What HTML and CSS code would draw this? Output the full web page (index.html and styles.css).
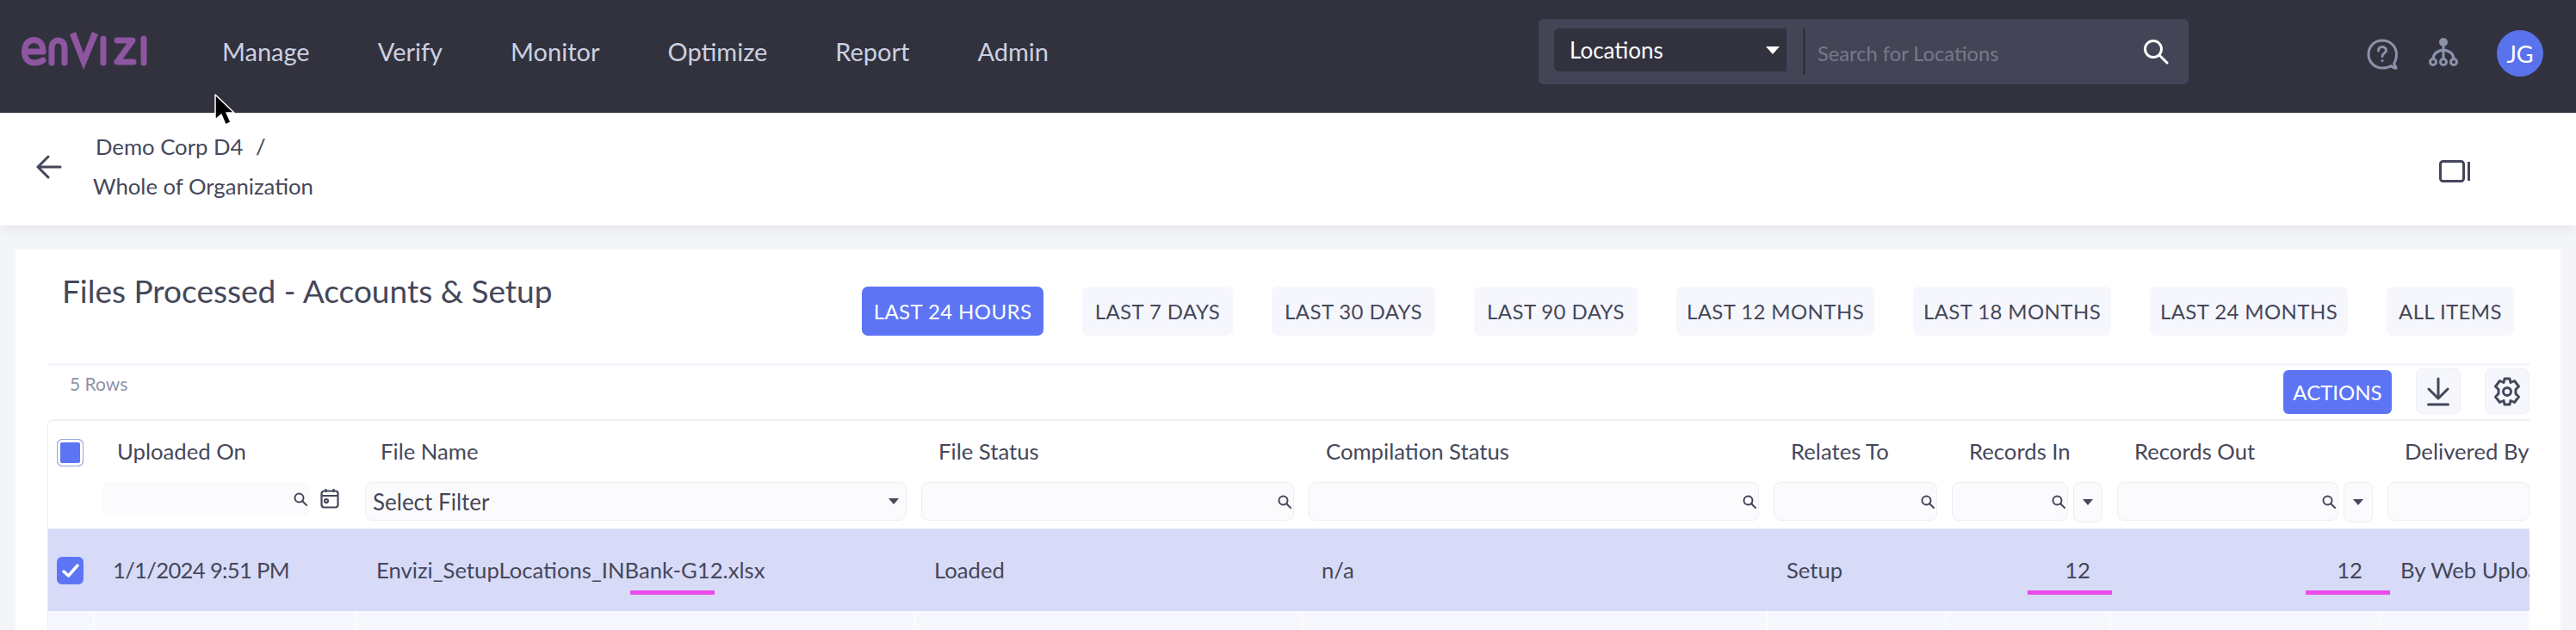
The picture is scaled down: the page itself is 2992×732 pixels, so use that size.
FILE: index.html
```html
<!DOCTYPE html>
<html lang="en">
<head>
    <meta charset="UTF-8">
    <title>Files Processed - Accounts &amp; Setup</title>
    <link rel="stylesheet" href="styles.css">
</head>
<body>
    <header class="topbar">
        <svg class="logo" viewBox="20 30 155 55" role="img" aria-label="envizi">
            <g fill="none" stroke="#8e55a0" stroke-width="7" stroke-linecap="round" stroke-linejoin="round">
                <path d="M29 60H50C50 51 46 46.500 39.500 46.500C32.500 46.500 28.500 52 28.500 60C28.500 68 33 73 40 73C44 73 47 72 50 70"/>
                <path d="M60 73V56C60 50 63.500 47 67.500 47C72 47 75 50 75 56V73"/>
                <path d="M120 45V73"/>
                <path d="M136 47H154L136 72H155"/>
                <path d="M167 45V73"/>
            </g>
            <path d="M81 40L88 37L97 62L107 37L114 40L97 81Z" fill="#8e55a0"/>
        </svg>
        <nav class="mainnav">
            <a>Manage</a>
            <a>Verify</a>
            <a>Monitor</a>
            <a>Optimize</a>
            <a>Report</a>
            <a>Admin</a>
        </nav>
        <div class="searchbox">
            <div class="searchtype"><span>Locations</span><i class="caret caret-white"></i></div>
            <div class="searchdivider"></div>
            <span class="searchplaceholder">Search for Locations</span>
            <svg class="searchicon" viewBox="0 0 30 30" fill="none" stroke="#fff" stroke-width="3" stroke-linecap="round">
                <circle cx="12" cy="12" r="9.500"/>
                <path d="M19 19L28 28"/>
            </svg>
        </div>
        <div class="topicons">
            <svg class="helpicon" viewBox="0 0 36 36" fill="none" stroke="#8b92aa" stroke-width="3" stroke-linecap="round" stroke-linejoin="round">
                <path d="M18 2C9 2 2 9 2 18C2 27 9 34 18 34C22 34 26 33 28 31.500C30 33.500 33 34.500 34 34C34.500 33 32.500 31.500 31.500 29C33.500 26 34.500 22 34.500 18C34.500 9 27 2 18 2Z"/>
                <path d="M13.500 14C13.500 11 15.500 9.500 18 9.500C20.500 9.500 22.500 11 22.500 13.500C22.500 16.500 18 17 18 20.500"/>
                <path d="M18 25.500V25.600"/>
            </svg>
            <svg class="orgicon" viewBox="0 0 34 34" fill="none" stroke="#8b92aa" stroke-width="3" stroke-linecap="round">
                <circle cx="17" cy="6" r="5" fill="#8b92aa" stroke="none"/>
                <path d="M17 8V26M5 26C5 19 10 16 17 15C24 16 29 19 29 26"/>
                <circle cx="5" cy="29" r="3.500" fill="#31323e"/>
                <circle cx="17" cy="29" r="3.500" fill="#31323e"/>
                <circle cx="29" cy="29" r="3.500" fill="#31323e"/>
            </svg>
            <div class="avatar">JG</div>
        </div>
    </header>

    <div class="subbar">
        <svg class="backicon" viewBox="0 0 30 28" fill="none" stroke="#45475a" stroke-width="3" stroke-linecap="round" stroke-linejoin="round">
            <path d="M2 14H28M14 2L2 14L14 26"/>
        </svg>
        <div class="crumbs">
            <div class="crumb-top">Demo Corp D4 <span class="crumb-slash">/</span></div>
            <div class="crumb-current">Whole of Organization</div>
        </div>
        <svg class="panelicon" viewBox="0 0 36 26" fill="none" stroke="#45475a" stroke-width="3" stroke-linejoin="round">
            <rect x="1.500" y="1.500" width="27" height="23" rx="3"/>
            <path d="M34.500 2V24"/>
        </svg>
    </div>

    <main class="card">
        <div class="cardhead">
            <h1>Files Processed - Accounts &amp; Setup</h1>
            <div class="ranges">
                <button class="range range-active">LAST 24 HOURS</button>
                <button class="range">LAST 7 DAYS</button>
                <button class="range">LAST 30 DAYS</button>
                <button class="range">LAST 90 DAYS</button>
                <button class="range">LAST 12 MONTHS</button>
                <button class="range">LAST 18 MONTHS</button>
                <button class="range">LAST 24 MONTHS</button>
                <button class="range">ALL ITEMS</button>
            </div>
        </div>

        <div class="toolbar">
            <span class="rowcount">5 Rows</span>
            <button class="actions">ACTIONS</button>
            <button class="toolbtn">
                <svg viewBox="0 0 26 34" width="26" height="34" fill="none" stroke="#45475a" stroke-width="3" stroke-linecap="round" stroke-linejoin="round">
                    <path d="M13 2V24M2 14L13 25L24 14"/>
                    <path d="M1.500 32H24.500"/>
                </svg>
            </button>
            <button class="toolbtn">
                <svg viewBox="0 0 32 34" width="32" height="34" fill="none" stroke="#45475a" stroke-width="3" stroke-linejoin="round">
                    <circle cx="16" cy="17" r="4.500"/>
                    <path d="M13 2H19L20 6.500L24.500 4.500L29.500 11L26 14.500V19.500L29.500 23L24.500 29.500L20 27.500L19 32H13L12 27.500L7.500 29.500L2.500 23L6 19.500V14.500L2.500 11L7.500 4.500L12 6.500Z"/>
                </svg>
            </button>
        </div>

        <div class="grid">
            <div class="cols headrow">
                <div class="cell checkcell"><span class="check check-partial"></span></div>
                <div class="cell">Uploaded On</div>
                <div class="cell">File Name</div>
                <div class="cell">File Status</div>
                <div class="cell">Compilation Status</div>
                <div class="cell">Relates To</div>
                <div class="cell">Records In</div>
                <div class="cell">Records Out</div>
                <div class="cell">Delivered By</div>
            </div>
            <div class="cols filterrow">
                <div></div>
                <div class="filter">
                    <div class="input input-plain"><svg class="mag" viewBox="0 0 16 16"><circle cx="6.500" cy="6.500" r="5"/><path d="M10 10L15 15"/></svg></div>
                    <svg class="calicon" viewBox="0 0 22 24" fill="none" stroke="#45475a" stroke-width="2.200" stroke-linejoin="round">
                        <rect x="1.500" y="3.500" width="19" height="19" rx="3"/>
                        <path d="M1.500 9H20.500M6.500 1V5M15.500 1V5"/>
                        <circle cx="7" cy="15" r="2"/>
                    </svg>
                </div>
                <div class="filter">
                    <div class="input input-select"><span>Select Filter</span><i class="caret"></i></div>
                </div>
                <div class="filter">
                    <div class="input"><svg class="mag" viewBox="0 0 16 16"><circle cx="6.500" cy="6.500" r="5"/><path d="M10 10L15 15"/></svg></div>
                </div>
                <div class="filter">
                    <div class="input"><svg class="mag" viewBox="0 0 16 16"><circle cx="6.500" cy="6.500" r="5"/><path d="M10 10L15 15"/></svg></div>
                </div>
                <div class="filter">
                    <div class="input"><svg class="mag" viewBox="0 0 16 16"><circle cx="6.500" cy="6.500" r="5"/><path d="M10 10L15 15"/></svg></div>
                </div>
                <div class="filter">
                    <div class="input"><svg class="mag" viewBox="0 0 16 16"><circle cx="6.500" cy="6.500" r="5"/><path d="M10 10L15 15"/></svg></div>
                    <div class="opbtn"><i class="caret"></i></div>
                </div>
                <div class="filter">
                    <div class="input"><svg class="mag" viewBox="0 0 16 16"><circle cx="6.500" cy="6.500" r="5"/><path d="M10 10L15 15"/></svg></div>
                    <div class="opbtn"><i class="caret"></i></div>
                </div>
                <div class="filter filter-last">
                    <div class="input"></div>
                </div>
            </div>
            <div class="cols datarow">
                <div class="cell checkcell"><span class="check check-on">
                    <svg viewBox="0 0 20 16" width="20" height="16" fill="none" stroke="#fff" stroke-width="3.500" stroke-linecap="round" stroke-linejoin="round"><path d="M2 9L7.500 14L18 2"/></svg>
                </span></div>
                <div class="cell cell-date">1/1/2024 9:51 PM</div>
                <div class="cell cell-file"><span class="marked">Envizi_SetupLocations_INBank-G12.xlsx<i class="mark mark-file"></i></span></div>
                <div class="cell">Loaded</div>
                <div class="cell">n/a</div>
                <div class="cell">Setup</div>
                <div class="cell cell-num"><span class="marked">12<i class="mark mark-in"></i></span></div>
                <div class="cell cell-num cell-out"><span class="marked">12<i class="mark mark-out"></i></span></div>
                <div class="cell">By Web Upload</div>
            </div>
            <div class="cols striperow">
                <div></div><div></div><div></div><div></div><div></div><div></div><div></div><div></div><div></div>
            </div>
        </div>
    </main>

    <svg class="cursor" viewBox="0 0 30 38">
        <path d="M2 1V30L9 24L14 36L20 33L15 22H24Z" fill="#000" stroke="#fff" stroke-width="1.500" stroke-linejoin="round"/>
    </svg>
</body>
</html>
```

FILE: styles.css
```css
* {
    box-sizing: border-box;
}
html, body {
    height: 732px;
    overflow: hidden;
}
body {
    margin: 0;
    position: relative;
    font-family: Lato, "Open Sans", sans-serif;
    font-size: 25.700px;
    color: #45475a;
    background-color: #f4f5f8;
}
button {
    font-family: inherit;
    border: none;
    padding: 0;
}

/* top bar */
.topbar {
    height: 132px;
    background-color: #31323e;
    display: flex;
    align-items: flex-start;
    border-bottom: 1px solid #e6e6ea;
}
.logo {
    width: 155px;
    height: 55px;
    margin: 30px 0 0 20px;
    flex: none;
}
.mainnav {
    display: flex;
    gap: 79px;
    margin: 42px 0 0 83px;
    color: #cdd0e0;
    font-size: 29px;
    line-height: 36px;
}
.searchbox {
    position: absolute;
    left: 1787px;
    top: 22px;
    width: 755px;
    height: 76px;
    background-color: #434557;
    border-radius: 6px;
    display: flex;
    align-items: flex-start;
    padding: 11px 23px 0 18px;
}
.searchtype {
    width: 270px;
    height: 50px;
    background-color: #31323e;
    border-radius: 6px 0 0 6px;
    color: #fff;
    font-size: 26px;
    display: flex;
    align-items: center;
    justify-content: space-between;
    padding: 0 8px 0 18px;
}
.searchdivider {
    width: 3px;
    height: 54px;
    margin-left: 19px;
    background-color: #31323e;
}
.searchplaceholder {
    margin: 14px 0 0 14px;
    color: #77798a;
    font-size: 23.700px;
    line-height: 30px;
    flex: 1;
}
.searchicon {
    width: 30px;
    height: 30px;
    margin-top: 12px;
}
.topicons {
    margin-left: auto;
    display: flex;
    align-items: flex-start;
    padding-right: 38px;
}
.helpicon {
    width: 36px;
    height: 36px;
    margin-top: 45px;
}
.orgicon {
    width: 34px;
    height: 34px;
    margin: 43px 0 0 36px;
}
.avatar {
    width: 54px;
    height: 54px;
    margin: 35px 0 0 45px;
    border-radius: 50%;
    background-color: #5a73ec;
    color: #fff;
    font-size: 27px;
    display: flex;
    align-items: center;
    justify-content: center;
}
.caret {
    display: block;
    width: 0;
    height: 0;
    border-left: 8px solid transparent;
    border-right: 8px solid transparent;
    border-top: 9px solid #45475a;
}
.caret-white {
    border-top-color: #fff;
}

/* breadcrumb bar */
.subbar {
    height: 130px;
    background-color: #fff;
    box-shadow: 0 4px 14px rgba(60, 60, 90, 0.08);
    display: flex;
    align-items: flex-start;
    position: relative;
}
.backicon {
    width: 30px;
    height: 28px;
    margin: 48px 0 0 42px;
}
.crumbs {
    margin: 22px 0 0 36px;
    line-height: 32px;
}
.crumb-top {
    margin-left: 3px;
}
.crumb-slash {
    margin-left: 8px;
}
.crumb-current {
    margin-top: 14px;
}
.panelicon {
    width: 36px;
    height: 26px;
    margin: 54px 123px 0 auto;
}

/* card */
.card {
    margin: 28px 18px 0;
    height: 460px;
    background-color: #fff;
    padding: 0 36px 0 37px;
}
.cardhead {
    height: 132px;
    display: flex;
    justify-content: space-between;
    align-items: flex-start;
    padding: 0 18px 0 17px;
}
h1 {
    margin: 26px 0 0;
    font-size: 37px;
    line-height: 44px;
    font-weight: 400;
}
.ranges {
    display: grid;
    grid-template-columns: 211px 175px 190px 190px 230px 230px 230px 148px;
    column-gap: 45px;
    margin-top: 43px;
}
.range {
    height: 57px;
    border-radius: 7px;
    background-color: #f6f7fd;
    color: #45475a;
    font-size: 24px;
    letter-spacing: 0.400px;
}
.range-active {
    background-color: #5d75f5;
    color: #fff;
}
.toolbar {
    height: 65px;
    border-top: 3px solid #f3f5fa;
    display: flex;
    align-items: flex-start;
}
.rowcount {
    margin: 8px 0 0 26px;
    font-size: 21px;
    line-height: 26px;
    color: #8f93a8;
    flex: 1;
}
.actions {
    width: 126px;
    height: 51px;
    margin-top: 5px;
    border-radius: 6px;
    background-color: #5d75f5;
    color: #fff;
    font-size: 24px;
}
.toolbtn {
    width: 52px;
    height: 53px;
    margin: 3px 0 0 28px;
    border: 1px solid #eef0f5;
    border-radius: 7px;
    background-color: #f6f7fd;
    display: flex;
    align-items: center;
    justify-content: center;
}

/* table */
.grid {
    border-top: 2px solid #f0f1f4;
    border-left: 1px solid #eceef3;
    border-radius: 6px 0 0 0;
    overflow: hidden;
}
.cols {
    display: grid;
    grid-template-columns: 53px 306px 648px 450px 540px 207px 192px 314px 172px;
}
.cell {
    white-space: nowrap;
    overflow: hidden;
}
.headrow {
    height: 71px;
    align-items: center;
    padding-bottom: 2px;
}
.headrow .cell {
    padding-left: 27px;
}
.headrow .checkcell,
.datarow .checkcell {
    padding-left: 10px;
    overflow: visible;
}
.headrow .checkcell {
    position: relative;
    top: 2px;
}
.check {
    display: block;
    width: 31px;
    height: 32px;
    border-radius: 6px;
}
.check-partial {
    background-color: #5d75f5;
    border: 1px solid #9aa6d8;
    box-shadow: inset 0 0 0 3px #fff;
}
.check-on {
    background-color: #5d75f5;
    display: flex;
    align-items: center;
    justify-content: center;
}
.filterrow {
    height: 55px;
    border-bottom: 1px solid #e3e5ee;
}
.filter {
    display: flex;
    gap: 6px;
    padding: 0 10px 0 7px;
    align-items: flex-start;
}
.filter-last {
    padding-right: 0;
}
.input {
    flex: 1;
    height: 45px;
    background-color: #fbfbfe;
    border: 1px solid #eceef2;
    border-radius: 8px;
    display: flex;
    align-items: center;
    justify-content: flex-end;
    padding-right: 2px;
}
.input-plain {
    height: 40px;
    flex: none;
    width: 242px;
    margin-left: 2px;
    border-color: #fbfbfe;
}
.input-select {
    justify-content: space-between;
    padding: 0 8px 0 8px;
    margin-left: 2px;
    font-size: 26px;
}
.input-select .caret,
.opbtn .caret {
    border-left-width: 6px;
    border-right-width: 6px;
    border-top-width: 7px;
}
.mag {
    width: 16px;
    height: 16px;
    fill: none;
    stroke: #45475a;
    stroke-width: 2;
    stroke-linecap: round;
}
.calicon {
    width: 22px;
    height: 24px;
    margin: 7px 0 0 6px;
}
.opbtn {
    width: 34px;
    height: 47px;
    flex: none;
    border: 1px solid #eceef2;
    border-radius: 8px;
    background-color: #fbfbfe;
    display: flex;
    align-items: center;
    justify-content: center;
}
.datarow {
    height: 95px;
    align-items: center;
    background-color: #d7dbf8;
}
.datarow .cell {
    padding-left: 22px;
    height: 95px;
    line-height: 95px;
}
.datarow .checkcell {
    padding-left: 10px;
    display: flex;
    align-items: center;
}
.datarow .cell-date {
    letter-spacing: -0.700px;
}
.datarow .cell-num {
    padding: 0 24px 0 0;
    text-align: right;
    overflow: visible;
}
.datarow .cell-out {
    padding-right: 22px;
}
.datarow .cell-file {
    overflow: visible;
}
.marked {
    position: relative;
    display: inline-block;
}
.mark {
    position: absolute;
    top: 71px;
    height: 5px;
    background-color: #ec4ae8;
}
.mark-file {
    left: 295px;
    width: 98px;
}
.mark-in {
    right: -25px;
    width: 98px;
}
.mark-out {
    right: -32px;
    width: 98px;
}
.striperow {
    height: 30px;
    background-color: #f6f8fe;
}
.striperow div {
    border-right: 1px solid #fff;
}

.cursor {
    position: absolute;
    left: 248px;
    top: 109px;
    width: 30px;
    height: 38px;
}
```
